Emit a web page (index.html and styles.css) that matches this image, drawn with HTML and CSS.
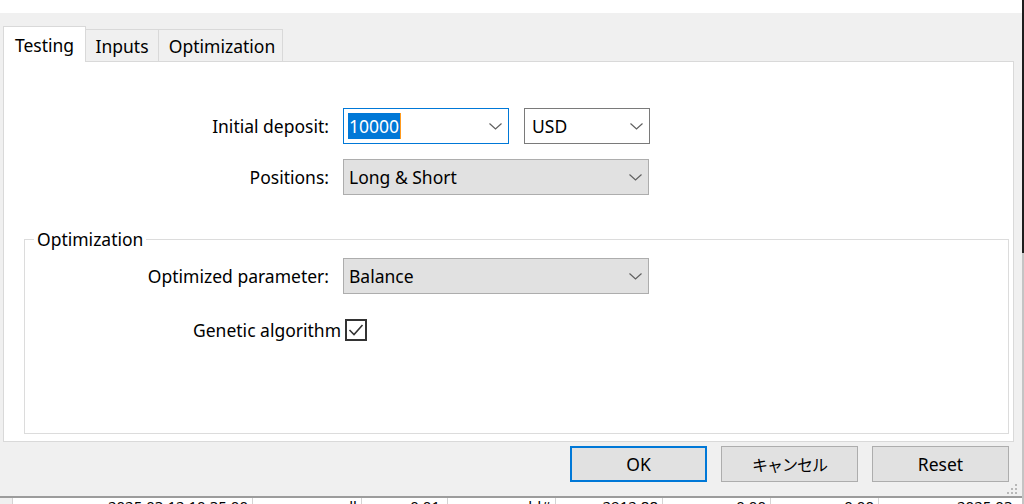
FILE: index.html
```html
<!DOCTYPE html>
<html lang="en">
<head>
<meta charset="utf-8">
<title>Tester settings</title>
<link rel="stylesheet" href="styles.css">
</head>
<body>
<div class="main">
  <div class="topstrip"></div>
  <div class="dialog">
    <div class="tabs">
      <div class="tab active">Testing</div>
      <div class="tab inputs">Inputs</div>
      <div class="tab optim">Optimization</div>
    </div>
    <div class="panel">
      <div class="row">
        <div class="label">Initial deposit:</div>
        <div class="combo focus">
          <span class="sel">10000</span>
          <svg class="chev" width="13" height="7" viewBox="0 0 13 7"><path d="M0.5 0.5 L6.5 6 L12.5 0.5" fill="none" stroke="#606060" stroke-width="1.2"/></svg>
        </div>
        <div class="combo white">
          <span class="val">USD</span>
          <svg class="chev" width="13" height="7" viewBox="0 0 13 7"><path d="M0.5 0.5 L6.5 6 L12.5 0.5" fill="none" stroke="#606060" stroke-width="1.2"/></svg>
        </div>
      </div>
      <div class="row">
        <div class="label">Positions:</div>
        <div class="combo grey">
          <span class="val">Long &amp; Short</span>
          <svg class="chev" width="13" height="7" viewBox="0 0 13 7"><path d="M0.5 0.5 L6.5 6 L12.5 0.5" fill="none" stroke="#606060" stroke-width="1.2"/></svg>
        </div>
      </div>
      <div class="group">
        <div class="legend">Optimization</div>
        <div class="row grow">
          <div class="label glabel">Optimized parameter:</div>
          <div class="combo grey">
            <span class="val">Balance</span>
            <svg class="chev" width="13" height="7" viewBox="0 0 13 7"><path d="M0.5 0.5 L6.5 6 L12.5 0.5" fill="none" stroke="#606060" stroke-width="1.2"/></svg>
          </div>
        </div>
        <div class="row checkrow">
          <div class="label clabel">Genetic algorithm</div>
          <div class="checkbox">
            <svg width="18" height="18" viewBox="0 0 18 18"><path d="M2.5 9 L7 13.5 L15.5 4" fill="none" stroke="#333" stroke-width="1.6"/></svg>
          </div>
        </div>
      </div>
    </div>
    <div class="buttons">
      <div class="btn ok">OK</div>
      <div class="btn jp">キャンセル</div>
      <div class="btn">Reset</div>
    </div>
    <svg class="grip" width="12" height="12" viewBox="0 0 12 12">
      <rect x="9" y="1" width="2" height="2" fill="#b8b8b8"/>
      <rect x="5" y="5" width="2" height="2" fill="#b8b8b8"/>
      <rect x="9" y="5" width="2" height="2" fill="#b8b8b8"/>
      <rect x="1" y="9" width="2" height="2" fill="#b8b8b8"/>
      <rect x="5" y="9" width="2" height="2" fill="#b8b8b8"/>
      <rect x="9" y="9" width="2" height="2" fill="#b8b8b8"/>
    </svg>
  </div>
  <div class="table">
    <div class="cell c0"></div>
    <div class="cell c1">2025.03.12 10:35:00</div>
    <div class="cell c2">sell</div>
    <div class="cell c3">0.01</div>
    <div class="cell c4">gold#</div>
    <div class="cell c5">2912.88</div>
    <div class="cell c6">0.00</div>
    <div class="cell c7">0.00</div>
    <div class="cell c8">2025.03</div>
  </div>
</div>
<div class="edge"></div>
</body>
</html>
```

FILE: styles.css
```css
* { box-sizing: border-box; }
html, body { margin: 0; padding: 0; }
body {
  width: 1024px;
  height: 504px;
  overflow: hidden;
  background: #f0f0f0;
  font-family: "Noto Sans", "Liberation Sans", sans-serif;
  font-size: 17.5px;
  color: #000;
  display: flex;
}
.main { width: 1022px; display: flex; flex-direction: column; }
.edge { width: 2px; background: linear-gradient(#1e1e1e 0 253px, #c4c4c4 253px); }
.topstrip { height: 13px; background: #fff; flex: none; }
.dialog { position: relative; height: 483px; padding: 13px 0 0 3px; flex: none; }
.tabs { display: flex; align-items: flex-end; height: 35px; position: relative; z-index: 1; }
.tab {
  height: 32px;
  border: 1px solid #d9d9d9;
  border-left: none;
  border-bottom: none;
  background: #f0f0f0;
  display: flex;
  align-items: center;
  justify-content: center;
}
.tab.active { width: 83px; height: 36px; margin-bottom: -1px; background: #fff; border-left: 1px solid #d9d9d9; }
.tab.inputs { width: 73px; }
.tab.optim { width: 124px; padding-left: 3px; }
.panel {
  width: 1011px;
  height: 381px;
  background: #fff;
  border: 1px solid #d9d9d9;
  padding-top: 46px;
  display: flex;
  flex-direction: column;
}
.row { display: flex; align-items: center; gap: 14px; height: 36px; flex: none; }
.row + .row { margin-top: 15px; }
.label { width: 325px; text-align: right; white-space: nowrap; }
.combo {
  height: 36px;
  border: 1px solid #adadad;
  display: flex;
  align-items: center;
  justify-content: space-between;
  padding: 0 6px 0 5px;
}
.combo.focus { width: 166px; border-color: #0078d7; background: #fff; padding-left: 4px; }
.combo.white { width: 126px; border-color: #7a7a7a; background: #fff; margin-left: 1px; padding-left: 7px; }
.combo.grey { width: 306px; background: #e1e1e1; border-color: #adadad; }
.sel {
  background: #0078d7;
  color: #fff;
  height: 26px;
  line-height: 26px;
  padding: 0 1px;
  border-right: 1px solid #ff9a1e;
}
.chev { display: block; flex: none; }
.group {
  margin: 44px 4px 7px 20px;
  border: 1px solid #dcdcdc;
  flex: 1;
}
.legend {
  display: table;
  margin: -13px 0 0 9px;
  padding: 0 3px;
  background: #fff;
  line-height: 24px;
}
.grow { margin-top: 7px; }
.glabel { width: 304px; }
.row.checkrow { margin-top: 18px; gap: 4px; }
.clabel { width: 316px; }
.checkbox {
  width: 22px;
  height: 22px;
  border: 2px solid #333;
  display: flex;
  align-items: center;
  justify-content: center;
}
.checkbox svg { display: block; }
.buttons {
  display: flex;
  justify-content: flex-end;
  gap: 14px;
  margin-top: 4px;
  padding-right: 13px;
}
.btn {
  width: 137px;
  height: 36px;
  background: #e1e1e1;
  border: 1px solid #adadad;
  display: flex;
  align-items: center;
  justify-content: center;
}
.btn.ok { border: 2px solid #0078d7; }
.btn.jp { font-family: "Noto Sans CJK JP", "Noto Sans", sans-serif; font-size: 16px; letter-spacing: -1px; }
.grip { position: absolute; right: 4px; bottom: 1px; }
.table {
  display: flex;
  height: 8px;
  border-top: 2px solid #9c9c9c;
  background: #fff;
  overflow: hidden;
  flex: none;
  font-size: 15px;
  line-height: 18px;
}
.cell {
  border-left: 1px solid #d4d4d4;
  text-align: right;
  padding-right: 4px;
  margin-top: -1px;
  white-space: nowrap;
  flex: none;
}
.c0 { width: 12px; border-left: none; background: #f0f0f0; }
.c1 { width: 240px; }
.c2 { width: 109px; }
.c3 { width: 86px; padding-right: 7px; }
.c4 { width: 108px; }
.c5 { width: 107px; }
.c6 { width: 108px; }
.c7 { width: 108px; }
.c8 { width: 144px; text-align: left; padding-left: 78px; }
```
